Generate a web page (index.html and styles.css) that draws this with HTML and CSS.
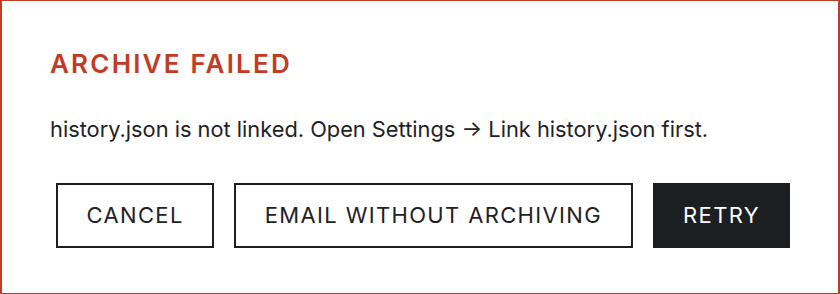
FILE: index.html
```html
<!DOCTYPE html>
<html>

<head>
    <title>Archive failed</title>
    <link rel="stylesheet" href="styles.css">
</head>

<body>
    <div class="dialog">
        <h2 class="title">ARCHIVE FAILED</h2>
        <p class="message">history.json is not linked. Open Settings → Link history.json first.</p>
        <div class="actions">
            <button class="btn">CANCEL</button>
            <button class="btn">EMAIL WITHOUT ARCHIVING</button>
            <button class="btn primary">RETRY</button>
        </div>
    </div>
</body>

</html>
```

FILE: styles.css
```css
body {
    margin: 0;
    font-family: Inter, "Noto Sans", sans-serif;
    background-color: white;
}

.dialog {
    box-sizing: border-box;
    height: 294px;
    border-style: solid;
    border-color: #c23b25;
    border-width: 1px 2px;
    padding: 47px 48px 0 48px;
}

.title {
    margin: 0;
    font-size: 26px;
    line-height: 32px;
    font-weight: 600;
    letter-spacing: 2.2px;
    color: #c23b25;
}

.message {
    margin: 34px 0 0 0;
    font-size: 21.8px;
    line-height: 30px;
    color: #1f2225;
}

.actions {
    display: flex;
    gap: 20px;
    margin: 39px 0 0 6px;
}

.btn {
    flex-shrink: 0;
    white-space: nowrap;
    font-family: Inter, "Noto Sans", sans-serif;
    font-size: 22px;
    line-height: 25px;
    letter-spacing: 1.35px;
    color: #1f2225;
    background-color: white;
    border: 2px solid #1c1f22;
    border-radius: 0;
    padding: 18px 28.5px;
}

.primary {
    color: white;
    background-color: #1c1f22;
}
```
